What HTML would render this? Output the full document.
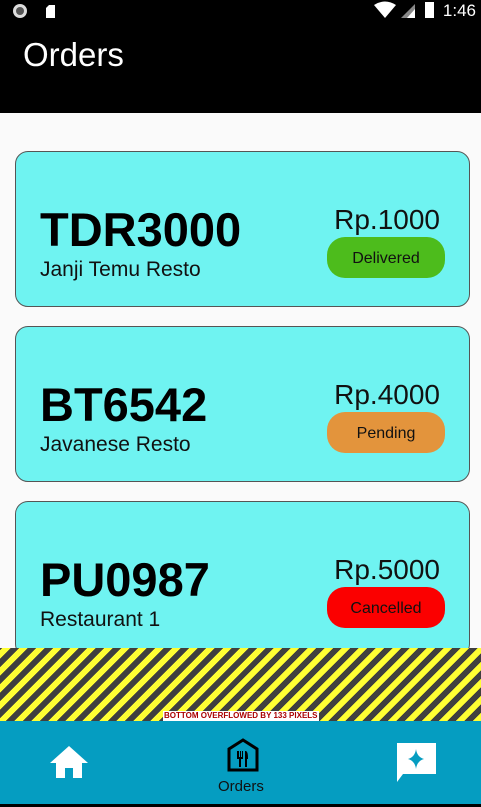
<!DOCTYPE html>
<html><head><style>
*{margin:0;padding:0;box-sizing:border-box}
body{width:481px;height:807px;overflow:hidden;background:#fafafa;font-family:"Liberation Sans",Roboto,sans-serif;position:relative}
.status{position:absolute;top:0;left:0;width:481px;height:113px;background:#000}
.title{position:absolute;left:23px;top:36px;color:#fff;font-size:33px}
.time{position:absolute;right:5px;top:1px;color:#fff;font-size:17px}
.card{position:absolute;left:15px;width:455px;height:156px;background:#6ff3f1;border:1px solid #555;border-radius:13px}
.code{position:absolute;left:24px;top:50px;font-size:47px;font-weight:bold;color:#000}
.name{position:absolute;left:24px;top:106px;font-size:21px;color:#111}
.price{position:absolute;right:29px;top:52px;font-size:28px;color:#111}
.badge{position:absolute;right:24px;top:85px;width:118px;height:41px;border-radius:18px;font-size:16px;text-align:center;line-height:43px;color:#111}
.stripe{position:absolute;left:0;top:648px;width:481px;height:73px;background:repeating-linear-gradient(-45deg,#ffff33 0 6px,#3f3f3f 6px 12px)}
.ovf{position:absolute;left:163px;top:711px;height:10px;background:#fff;color:#a00;font-size:8px;font-weight:bold;line-height:10px;padding:0 1px;white-space:nowrap}
.nav{position:absolute;left:0;top:721px;width:481px;height:83px;background:#059dc1}
.bot{position:absolute;left:0;top:804px;width:481px;height:3px;background:#000}
</style></head><body>
<div class="status">
<svg style="position:absolute;left:11px;top:3px" width="48" height="16"><circle cx="9" cy="8" r="7" fill="#ddd"/><circle cx="9" cy="8" r="4" fill="#555"/><path d="M44 2h-6l-3 3v10h9z" fill="#fff"/></svg>
<svg style="position:absolute;left:373px;top:1px" width="70" height="18"><path d="M1 4 Q 12 -3 23 4 L12 17z" fill="#fff"/><path d="M42 3v14h-14z" fill="#888"/><path d="M42 8v9h-8z" fill="#fff"/><rect x="52" y="1" width="9" height="16" fill="#fff"/></svg>
<div class="time">1:46</div>
<div class="title">Orders</div>
</div>
<div class="card" style="top:151px"><div class="code">TDR3000</div><div class="name">Janji Temu Resto</div><div class="price">Rp.1000</div><div class="badge" style="background:#4dbc1c">Delivered</div></div>
<div class="card" style="top:326px"><div class="code">BT6542</div><div class="name">Javanese Resto</div><div class="price">Rp.4000</div><div class="badge" style="background:#e3943c">Pending</div></div>
<div class="card" style="top:501px"><div class="code">PU0987</div><div class="name">Restaurant 1</div><div class="price">Rp.5000</div><div class="badge" style="background:#fb0000">Cancelled</div></div>
<div class="stripe"></div>
<div class="ovf">BOTTOM OVERFLOWED BY 133 PIXELS</div>
<div class="nav">
<svg style="position:absolute;left:49px;top:23px" width="40" height="34"><path d="M20 2 L39 19 H33 V34 H24 V24 H16 V34 H7 V19 H1z" fill="#fff"/></svg>
<svg style="position:absolute;left:226px;top:16px" width="34" height="36"><path d="M17 3 L31 12 V33 H3 V12z" fill="none" stroke="#000" stroke-width="3"/><path d="M11 14v8h2v8h2v-8h2v-8h-1v6h-1v-6h-1v6h-1v-6z M20 14c2 1 2 5 2 8h-1v8h-2v-16z" fill="#000"/></svg>
<div style="position:absolute;left:218px;top:57px;font-size:15px;color:#111">Orders</div>
<svg style="position:absolute;left:396px;top:22px" width="41" height="40"><path d="M1 0 H40 V31 H7 L1 39z" fill="#fff"/><path d="M20 6 Q21 14 28 16 Q21 18 20 26 Q19 18 12 16 Q19 14 20 6z" fill="#059dc1"/></svg>
</div>
<div class="bot"></div>
</body></html>
